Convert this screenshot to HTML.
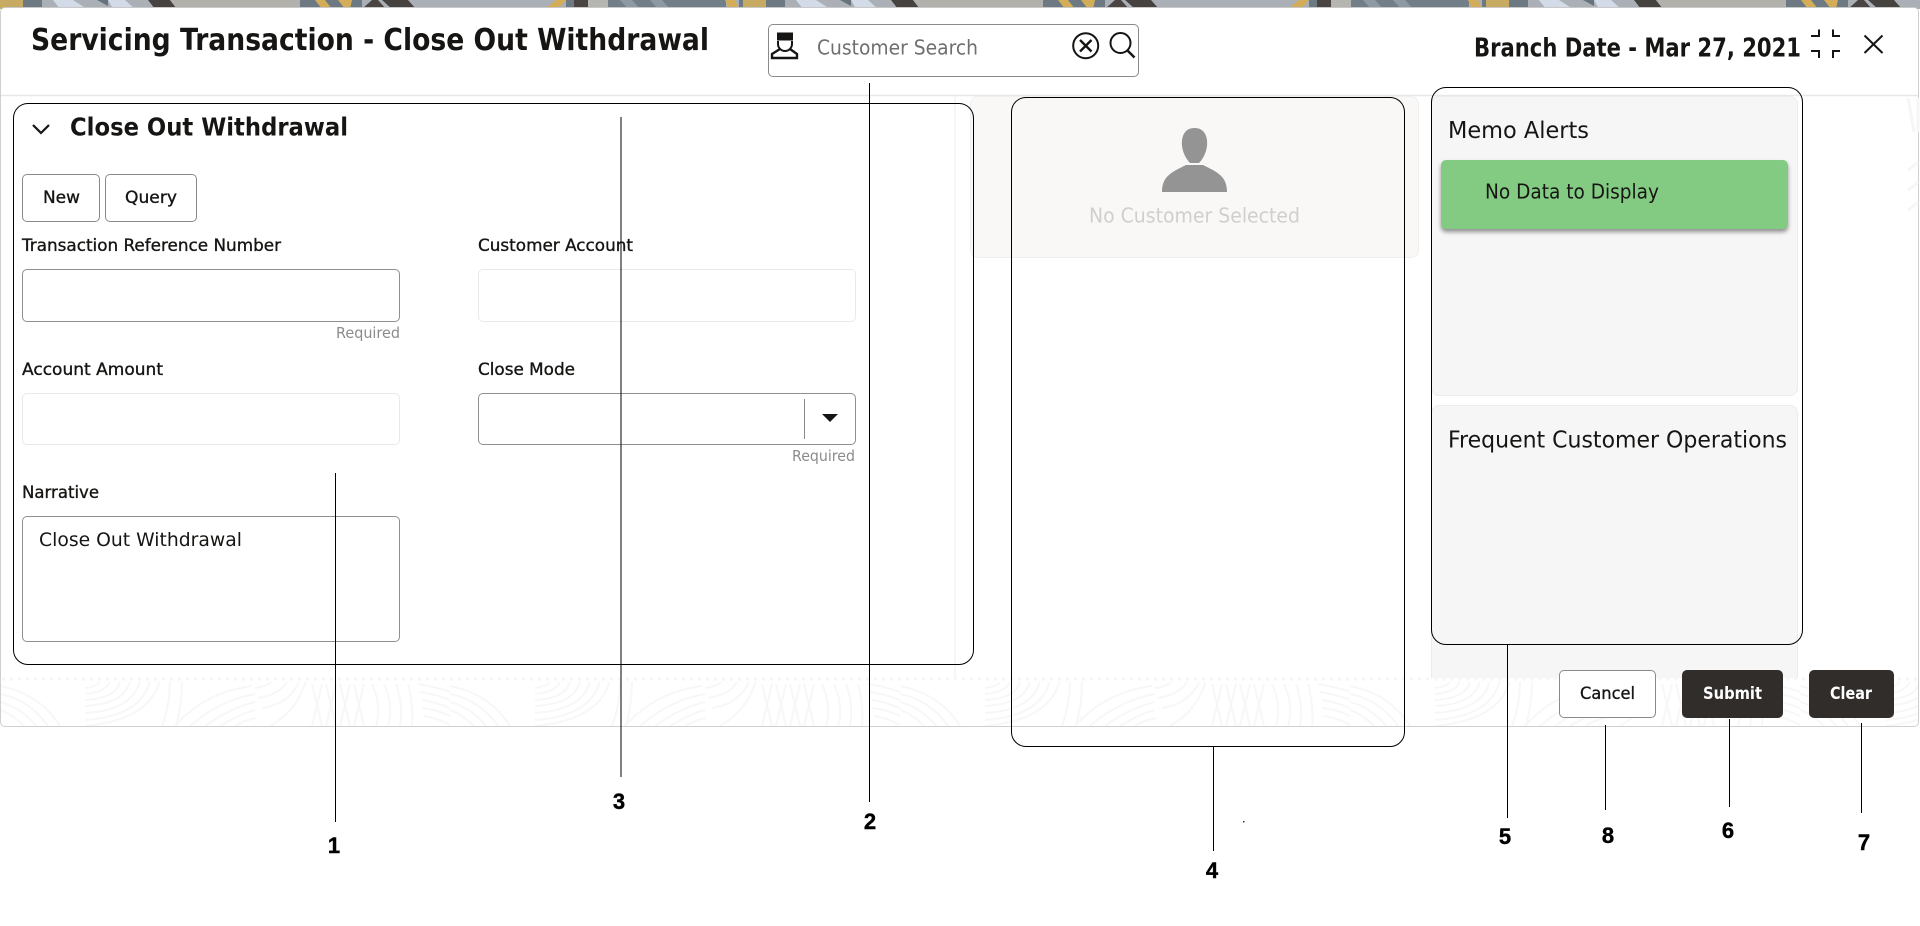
<!DOCTYPE html>
<html lang="en">
<head>
<meta charset="utf-8">
<title>Servicing Transaction - Close Out Withdrawal</title>
<style>
html,body{margin:0;padding:0;background:#fff;width:1920px;height:926px;overflow:hidden}
div{position:absolute;box-sizing:border-box}
#modal{left:0;top:7px;width:1919px;height:720px;background:#fff;border:1px solid #cfcfcf;border-top:1px solid #c9c9c9;border-radius:5px}
#overlay{position:absolute;left:0;top:0;width:1920px;height:926px}
.inp{background:#fff;border:1px solid #8f8f8f;border-radius:5px}
.off{background:#fff;border:1px solid #e9e9e9;border-radius:5px}
.btn{background:#fff;border:1px solid #8a8a8a;border-radius:5px}
.dark{background:#312d2a;border-radius:5px}
.note{border:1.2px solid #000;border-radius:15px;background:transparent}
text{font-family:"DejaVu Sans","Liberation Sans",sans-serif;fill:#161513}
.b{font-weight:700}
.m{stroke-width:.35px}
.num{font-family:"Liberation Sans",sans-serif;font-weight:700;font-size:22px;fill:#000;text-anchor:middle;stroke:#000;stroke-width:.4px}
</style>
</head>
<body>
<svg id="strip" style="position:absolute;left:0;top:0" width="1920" height="9">
<defs>
<pattern id="tile" x="0" y="0" width="743" height="9" patternUnits="userSpaceOnUse">
<rect width="743" height="9" fill="#aab0b6"/>
<rect x="0" width="23" height="9" fill="#c8ab62"/>
<rect x="23" width="19" height="9" fill="#6d7983"/>
<polygon points="53,0 73,0 87,9 60,9" fill="#d2dbe7"/>
<polygon points="97,0 108,0 108,6" fill="#66727c"/>
<polygon points="108,0 125,0 135,9 113,9" fill="#d2dbe7"/>
<polygon points="148,0 170,0 177,9 155,9" fill="#46423f"/>
<polygon points="170,0 305,0 300,9 177,9" fill="#b3b1ac"/>
<rect x="300" width="62" height="9" fill="#6d7983"/>
<polygon points="315,0 325,0 332,9 322,9" fill="#d3ad58"/>
<polygon points="338,0 352,0 350,9 345,9" fill="#d3ad58"/>
<polygon points="362,9 372,0 378,0 386,9" fill="#4a4542"/>
<polygon points="382,0 408,0 416,9 392,9" fill="#46423f"/>
<polygon points="545,9 556,0 566,0 558,9" fill="#d3ad58"/>
<rect x="566" width="8" height="9" fill="#6d7983"/>
<rect x="574" width="14" height="9" fill="#4a4542"/>
<rect x="588" width="20" height="9" fill="#b5b5b2"/>
<rect x="608" width="118" height="9" fill="#727e88"/>
<polygon points="620,0 632,0 640,9 628,9" fill="#8f99a1"/>
<polygon points="650,0 662,0 670,9 658,9" fill="#8f99a1"/>
<polygon points="725,0 735,0 739,9 729,9" fill="#d3ad58"/>
<rect x="739" width="4" height="9" fill="#6d7983"/>
</pattern>
<pattern id="foot" x="0" y="680" width="450" height="46" patternUnits="userSpaceOnUse">
<g fill="none" stroke="#f7f7f7" stroke-width="2">
<path d="M0 6 Q40 14 60 46M0 14 Q30 20 48 46M0 22 Q22 28 36 46M0 30 Q12 34 24 46"/>
<path d="M85 8 Q100 6 100 0M85 14 Q108 12 110 0M85 20 Q118 18 120 0M85 26 Q126 24 130 0M85 33 Q134 30 140 0M85 40 Q142 36 150 0M85 46 Q150 40 160 0M170 0 Q170 24 162 46M182 0 Q182 24 176 46"/>
<path d="M175 46 Q205 12 252 6M190 46 Q220 20 255 14M205 46 Q230 28 255 22M220 46 Q240 34 255 30M235 46 Q245 40 256 38"/>
<path d="M255 8 Q270 6 272 0M258 18 Q282 14 288 0M262 28 Q290 24 300 0M270 46 Q298 30 306 0"/>
<path d="M312 4 L322 46M322 4 L312 46M326 4 L336 46M336 4 L326 46M340 4 L350 46M350 4 L340 46M354 4 L364 46M364 4 L354 46"/>
<path d="M372 4 Q382 26 376 46M384 4 Q394 26 388 46M396 4 Q404 26 400 46M408 4 Q414 26 412 46"/>
<path d="M418 4 Q470 12 508 46M420 12 Q460 18 494 46M422 20 Q450 24 480 46M422 28 Q445 30 466 46M424 36 Q438 38 452 46"/>
</g>
</pattern>
</defs>
<rect width="1920" height="9" fill="url(#tile)"/>
</svg>

<div id="modal"></div>
<svg style="position:absolute;left:0;top:0" width="1920" height="926">
<line x1="2" y1="679" x2="1917" y2="679" stroke="#f6f6f6" stroke-width="3" stroke-dasharray="3 5"/>
<rect x="1" y="682" width="1917" height="44" fill="url(#foot)"/>
<g fill="none" stroke="#f6f6f6" stroke-width="3">
<path d="M1908 98 L1914 132M1918 98 L1918 132M1908 170 Q1912 168 1918 162M1908 190 Q1912 188 1918 182M1908 210 Q1912 208 1918 202"/>
</g>
<line x1="1" y1="95.5" x2="1918" y2="95.5" stroke="#e8e8e8" stroke-width="1.5"/>
<line x1="955" y1="96" x2="955" y2="677" stroke="#eeeeee"/>
</svg>

<div class="btn" style="left:22px;top:174px;width:78px;height:48px"></div>
<div class="btn" style="left:105px;top:174px;width:92px;height:48px"></div>
<div class="inp" style="left:22px;top:269px;width:378px;height:53px"></div>
<div class="off" style="left:478px;top:269px;width:378px;height:53px"></div>
<div class="off" style="left:22px;top:393px;width:378px;height:52px"></div>
<div class="inp" style="left:478px;top:393px;width:378px;height:52px"></div>
<div style="left:804px;top:399px;width:1px;height:40px;background:#8a8a8a"></div>
<div class="inp" style="left:22px;top:516px;width:378px;height:126px"></div>

<div style="left:970px;top:96px;width:449px;height:162px;background:#f9f8f7;border:1px solid #efefef;border-radius:8px"></div>
<div style="left:1431px;top:96px;width:367px;height:300px;background:#f6f6f6;border:1px solid #ececec;border-radius:8px"></div>
<div style="left:1431px;top:405px;width:367px;height:273px;background:#f6f6f6;border:1px solid #ececec;border-bottom:0;border-radius:8px 8px 0 0"></div>
<div style="left:1441px;top:160px;width:347px;height:69px;background:#83cb83;border-radius:5px;box-shadow:0 3px 4px rgba(0,0,0,.42)"></div>

<div class="btn" style="left:768px;top:24px;width:371px;height:53px"></div>
<div class="btn" style="left:1559px;top:670px;width:97px;height:48px"></div>
<div class="dark" style="left:1682px;top:670px;width:101px;height:48px"></div>
<div class="dark" style="left:1809px;top:670px;width:85px;height:48px"></div>

<div class="note" style="left:13px;top:103px;width:961px;height:562px"></div>
<div class="note" style="left:1011px;top:97px;width:394px;height:650px"></div>
<div class="note" style="left:1431px;top:87px;width:372px;height:558px"></div>

<svg id="overlay" width="1920" height="926" viewBox="0 0 1920 926">
<text class="b" x="31" y="50" font-size="30" textLength="678" lengthAdjust="spacingAndGlyphs">Servicing Transaction - Close Out Withdrawal</text>
<text class="b" x="70" y="135.5" font-size="25" textLength="278" lengthAdjust="spacingAndGlyphs">Close Out Withdrawal</text>
<path d="M33 125 L41 133 L49 125" fill="none" stroke="#161513" stroke-width="2.2"/>
<text class="m" stroke="#161513" x="43" y="203" font-size="17" textLength="37" lengthAdjust="spacingAndGlyphs">New</text>
<text class="m" stroke="#161513" x="125" y="203" font-size="17" textLength="52" lengthAdjust="spacingAndGlyphs">Query</text>
<text class="m" stroke="#161513" x="22" y="251" font-size="17" textLength="259" lengthAdjust="spacingAndGlyphs">Transaction Reference Number</text>
<text class="m" stroke="#161513" x="478" y="251" font-size="17" textLength="155" lengthAdjust="spacingAndGlyphs">Customer Account</text>
<text x="336" y="338" font-size="15" textLength="64" lengthAdjust="spacingAndGlyphs" style="fill:#8b8b8b">Required</text>
<text class="m" stroke="#161513" x="22" y="375" font-size="17" textLength="141" lengthAdjust="spacingAndGlyphs">Account Amount</text>
<text class="m" stroke="#161513" x="478" y="375" font-size="17" textLength="97" lengthAdjust="spacingAndGlyphs">Close Mode</text>
<polygon points="822,414 838,414 830,422" fill="#161513"/>
<text x="792" y="461" font-size="15" textLength="63" lengthAdjust="spacingAndGlyphs" style="fill:#8b8b8b">Required</text>
<text class="m" stroke="#161513" x="22" y="498" font-size="17" textLength="77" lengthAdjust="spacingAndGlyphs">Narrative</text>
<text x="39" y="546" font-size="19" textLength="203" lengthAdjust="spacingAndGlyphs">Close Out Withdrawal</text>

<g fill="none" stroke="#161513" stroke-width="2">
<path d="M778 41 v3 a7 7 0 0 0 14 0 v-3"/>
<path d="M780 49 L772 54 V58 H797 V54 L790 49" stroke-width="2.4"/>
<circle cx="1085.7" cy="45.7" r="12.5"/>
<path d="M1080 40 L1091.5 51.5M1091.5 40 L1080 51.5" stroke-width="2.4"/>
<circle cx="1120.5" cy="43" r="10"/>
<path d="M1127.5 50.5 L1134.5 57.5" stroke-width="2.4"/>
</g>
<rect x="777" y="32.5" width="16" height="8" fill="#161513"/>
<text x="817" y="54.5" font-size="20" textLength="161" lengthAdjust="spacingAndGlyphs" style="fill:#6f6f6f">Customer Search</text>

<text class="b" x="1474" y="56.5" font-size="26" textLength="327" lengthAdjust="spacingAndGlyphs">Branch Date - Mar 27, 2021</text>
<g fill="none" stroke="#161513" stroke-width="2">
<path d="M1811 36 H1819 V29.5M1833 29.5 V36 H1840M1811 51 H1819 V58M1833 58 V51 H1840"/>
<path d="M1864.5 35.5 L1882.5 53M1882.5 35.5 L1864.5 53"/>
</g>

<path d="M1194.5 128 C1204 128 1208 136 1207 146 C1206 154 1202 160 1199 163 L1190 163 C1187 160 1183 154 1182 146 C1181 136 1185 128 1194.5 128Z" fill="#949494"/>
<path d="M1162 192 C1162 176 1172 172 1186 165 L1203 165 C1217 172 1227 176 1227 192 Z" fill="#949494"/>
<text x="1089" y="222.5" font-size="20" textLength="211" lengthAdjust="spacingAndGlyphs" style="fill:#cfcfcf">No Customer Selected</text>

<text x="1448" y="138" font-size="23" textLength="141" lengthAdjust="spacingAndGlyphs">Memo Alerts</text>
<text x="1485" y="198.5" font-size="20" textLength="174" lengthAdjust="spacingAndGlyphs">No Data to Display</text>
<text x="1448" y="447.5" font-size="23" textLength="339" lengthAdjust="spacingAndGlyphs">Frequent Customer Operations</text>

<text class="m" stroke="#161513" x="1580" y="699" font-size="17" textLength="55" lengthAdjust="spacingAndGlyphs">Cancel</text>
<text class="b" x="1703" y="699" font-size="17" textLength="59" lengthAdjust="spacingAndGlyphs" style="fill:#fff">Submit</text>
<text class="b" x="1830" y="699" font-size="17" textLength="42" lengthAdjust="spacingAndGlyphs" style="fill:#fff">Clear</text>

<g stroke="#000" stroke-width="1">
<line x1="335.5" y1="473" x2="335.5" y2="822"/>
<line x1="621" y1="117" x2="621" y2="777"/>
<line x1="869.5" y1="83" x2="869.5" y2="802"/>
<line x1="1213.5" y1="746" x2="1213.5" y2="851"/>
<line x1="1507.5" y1="644" x2="1507.5" y2="818"/>
<line x1="1605.5" y1="725" x2="1605.5" y2="810"/>
<line x1="1729.5" y1="719" x2="1729.5" y2="807"/>
<line x1="1861.5" y1="723" x2="1861.5" y2="813"/>
</g>
<rect x="1243" y="821" width="1.5" height="1.5" fill="#333"/>
<text class="num" x="334" y="853">1</text>
<text class="num" x="870" y="829">2</text>
<text class="num" x="619" y="809">3</text>
<text class="num" x="1212" y="878">4</text>
<text class="num" x="1505" y="844">5</text>
<text class="num" x="1728" y="838">6</text>
<text class="num" x="1864" y="850">7</text>
<text class="num" x="1608" y="843">8</text>
</svg>
</body>
</html>
